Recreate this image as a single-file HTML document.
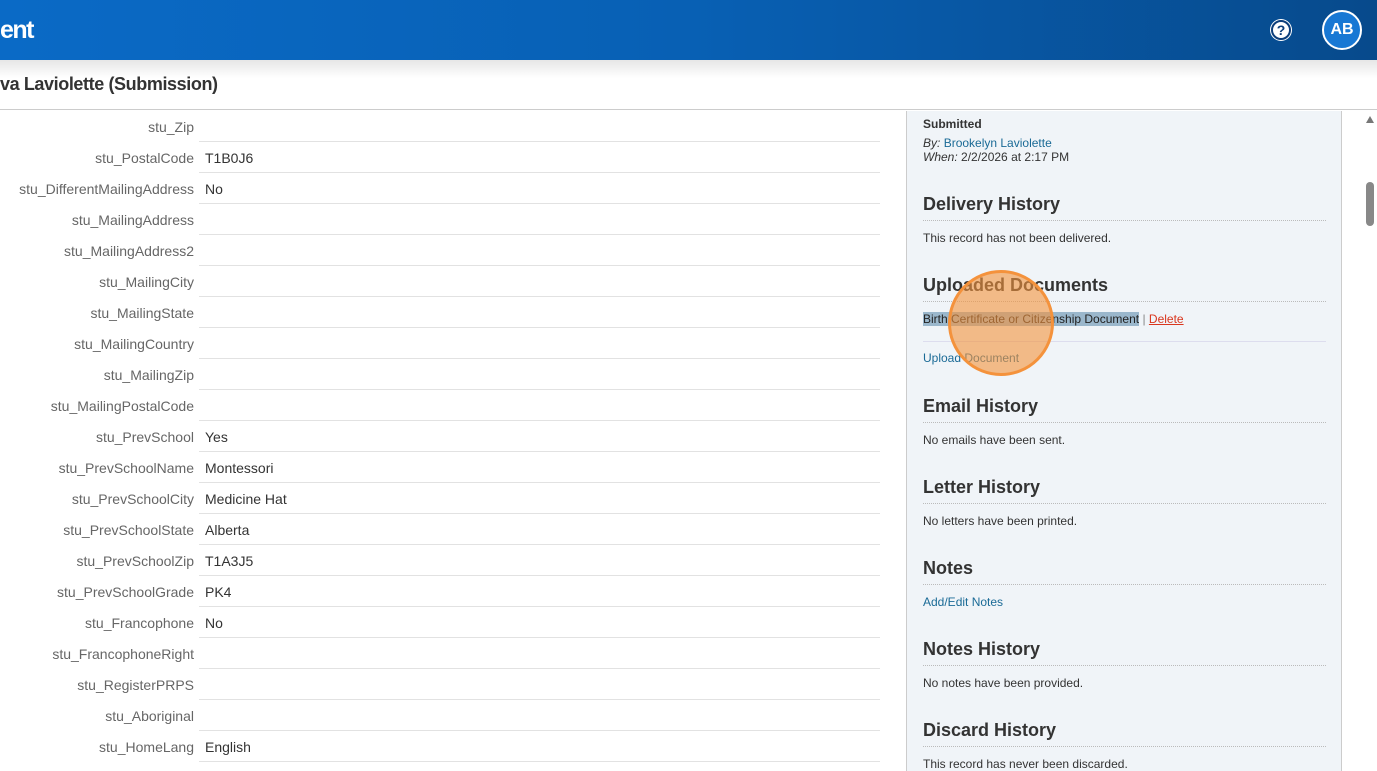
<!DOCTYPE html>
<html><head><style>
*{margin:0;padding:0;box-sizing:border-box}
body{width:1377px;height:769px;overflow:hidden;background:#fff;font-family:"Liberation Sans",Arial,sans-serif;position:relative}
.hdr{position:absolute;left:0;top:0;width:1377px;height:60px;background:linear-gradient(90deg,#0a6ac6 0%,#0860b4 50%,#074a8c 100%)}
.hdr .t{position:absolute;left:0;top:16px;color:#fff;font-size:25px;font-weight:bold;letter-spacing:-1.5px}
.help{position:absolute;left:1271px;top:20px;width:20px;height:20px;border-radius:50%;background:#fff;border:2px solid #0b3d7a;box-shadow:0 0 0 1px #fff;color:#0b3d7a;font-size:14px;font-weight:bold;text-align:center;line-height:17px}
.av{position:absolute;left:1322px;top:10px;width:40px;height:40px;border-radius:50%;background:#1878d4;border:2px solid #fff;color:#fff;font-weight:bold;font-size:16px;text-align:center;line-height:36px}
.sub{position:absolute;left:0;top:60px;width:1377px;height:50px;background:linear-gradient(#e6e6e6,#fff 18px);border-bottom:1px solid #ccc}
.sub span{position:absolute;left:0;top:14px;font-size:18px;font-weight:bold;color:#333;letter-spacing:-0.4px}
.row{position:absolute;left:0;width:880px;height:31px}
.row .l{position:absolute;right:686px;top:8px;font-size:14px;color:#666;white-space:nowrap}
.row .v{position:absolute;left:205px;top:8px;font-size:14px;color:#333}
.row .ln{position:absolute;left:199px;right:0;bottom:0;border-bottom:1px solid #e2e2e2}
.pn{position:absolute;left:906px;top:111px;width:436px;height:660px;background:#f0f4f8;border-left:1px solid #ccc;border-right:1px solid #ccc}
.pn div{position:absolute;left:16px;font-size:12px;color:#333;white-space:nowrap}
.h{font-size:18px!important;font-weight:bold;color:#333}
.dl{width:403px;border-top:1px dotted #bbb;height:0}
a{color:#1a6a96;text-decoration:none}
.sb{position:absolute;left:1342px;top:111px;width:35px;height:658px;background:#fff}
</style></head><body>
<div class="hdr"><div class="t">ent</div><div class="help">?</div><div class="av">AB</div></div>
<div class="sub"><span>va Laviolette (Submission)</span></div>

<div class="row" style="top:111px"><span class="l">stu_Zip</span><span class="v"></span><div class="ln"></div></div>
<div class="row" style="top:142px"><span class="l">stu_PostalCode</span><span class="v">T1B0J6</span><div class="ln"></div></div>
<div class="row" style="top:173px"><span class="l">stu_DifferentMailingAddress</span><span class="v">No</span><div class="ln"></div></div>
<div class="row" style="top:204px"><span class="l">stu_MailingAddress</span><div class="ln"></div></div>
<div class="row" style="top:235px"><span class="l">stu_MailingAddress2</span><div class="ln"></div></div>
<div class="row" style="top:266px"><span class="l">stu_MailingCity</span><div class="ln"></div></div>
<div class="row" style="top:297px"><span class="l">stu_MailingState</span><div class="ln"></div></div>
<div class="row" style="top:328px"><span class="l">stu_MailingCountry</span><div class="ln"></div></div>
<div class="row" style="top:359px"><span class="l">stu_MailingZip</span><div class="ln"></div></div>
<div class="row" style="top:390px"><span class="l">stu_MailingPostalCode</span><div class="ln"></div></div>
<div class="row" style="top:421px"><span class="l">stu_PrevSchool</span><span class="v">Yes</span><div class="ln"></div></div>
<div class="row" style="top:452px"><span class="l">stu_PrevSchoolName</span><span class="v">Montessori</span><div class="ln"></div></div>
<div class="row" style="top:483px"><span class="l">stu_PrevSchoolCity</span><span class="v">Medicine Hat</span><div class="ln"></div></div>
<div class="row" style="top:514px"><span class="l">stu_PrevSchoolState</span><span class="v">Alberta</span><div class="ln"></div></div>
<div class="row" style="top:545px"><span class="l">stu_PrevSchoolZip</span><span class="v">T1A3J5</span><div class="ln"></div></div>
<div class="row" style="top:576px"><span class="l">stu_PrevSchoolGrade</span><span class="v">PK4</span><div class="ln"></div></div>
<div class="row" style="top:607px"><span class="l">stu_Francophone</span><span class="v">No</span><div class="ln"></div></div>
<div class="row" style="top:638px"><span class="l">stu_FrancophoneRight</span><div class="ln"></div></div>
<div class="row" style="top:669px"><span class="l">stu_RegisterPRPS</span><div class="ln"></div></div>
<div class="row" style="top:700px"><span class="l">stu_Aboriginal</span><div class="ln"></div></div>
<div class="row" style="top:731px"><span class="l">stu_HomeLang</span><span class="v">English</span><div class="ln"></div></div>

<div class="pn">
<div style="top:6px;font-weight:bold">Submitted</div>
<div style="top:25px"><i>By:</i> <a>Brookelyn Laviolette</a></div>
<div style="top:39px"><i>When:</i> 2/2/2026 at 2:17 PM</div>
<div class="h" style="top:83px">Delivery History</div><div class="dl" style="top:109px"></div>
<div style="top:120px">This record has not been delivered.</div>
<div class="h" style="top:164px">Uploaded Documents</div><div class="dl" style="top:190px"></div>
<div style="top:201px"><span style="background:#9ab7cc;color:#222">Birth Certificate or Citizenship Document</span> <span style="color:#888">|</span> <a style="color:#d9361e;text-decoration:underline">Delete</a></div>
<div style="top:230px;width:403px;border-top:1px solid #dde;height:0"></div>
<div style="top:240px"><a>Upload Document</a></div>
<div class="h" style="top:285px">Email History</div><div class="dl" style="top:311px"></div>
<div style="top:322px">No emails have been sent.</div>
<div class="h" style="top:366px">Letter History</div><div class="dl" style="top:392px"></div>
<div style="top:403px">No letters have been printed.</div>
<div class="h" style="top:447px">Notes</div><div class="dl" style="top:473px"></div>
<div style="top:484px"><a>Add/Edit Notes</a></div>
<div class="h" style="top:528px">Notes History</div><div class="dl" style="top:554px"></div>
<div style="top:565px">No notes have been provided.</div>
<div class="h" style="top:609px">Discard History</div><div class="dl" style="top:635px"></div>
<div style="top:646px">This record has never been discarded.</div>
</div>
<div class="sb"><div style="position:absolute;left:24px;top:5px;width:0;height:0;border-left:4px solid transparent;border-right:4px solid transparent;border-bottom:7px solid #777"></div><div style="position:absolute;left:24px;top:71px;width:8px;height:44px;border-radius:4px;background:#888"></div></div>
<div style="position:absolute;left:948px;top:270px;width:106px;height:106px;border-radius:50%;background:rgba(244,146,60,0.6);border:3px solid #f4923c"></div>
</body></html>
